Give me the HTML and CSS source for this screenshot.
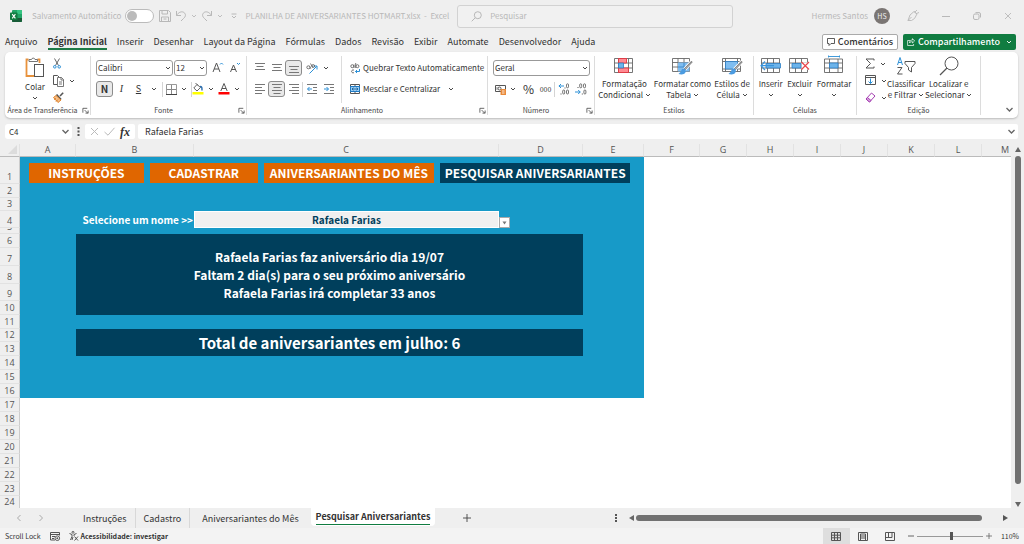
FILE: index.html
```html
<!DOCTYPE html>
<html lang="pt-BR">
<head>
<meta charset="utf-8">
<title>PLANILHA DE ANIVERSARIANTES HOTMART.xlsx - Excel</title>
<link rel="stylesheet" href="styles.css">
</head>
<body>
<svg class="defs" aria-hidden="true">
  <symbol id="chev" viewBox="0 0 6 6"><path d="M1 2l2 2 2-2" fill="none" stroke="currentColor" stroke-width=".9"/></symbol>
  <symbol id="launch" viewBox="0 0 8 8"><path d="M1 6.500V1.500H6M3 3.500l3.500 3.500M7 4v3H4" fill="none" stroke="currentColor" stroke-width=".9"/></symbol>
</svg>

<header class="titlebar">
  <svg class="app" width="12" height="12" viewBox="0 0 12 12"><rect x="2" width="10" height="12" rx="1" fill="#21a366"/><path d="M7 0h4a1 1 0 0 1 1 1v3H7z" fill="#33c481"/><path d="M2 8h10v3a1 1 0 0 1-1 1H3a1 1 0 0 1-1-1z" fill="#185c37"/><rect y="2.500" width="7.500" height="7.500" rx=".8" fill="#107c41"/><path d="M2.200 4.200l3.200 4.200M5.400 4.200L2.200 8.400" stroke="#fff" stroke-width="1.100"/></svg>
  <label class="autosave">Salvamento Automático <input type="checkbox"></label>
  <div class="quick">
    <button aria-label="Salvar"><svg width="12" height="12" viewBox="0 0 12 12"><path d="M.5.500h9L11.500 2.500v9H.5zM3 .5v3.500h5.500V.5M2.500 11.500V7h7v4.500M4.500 9h3" fill="none" stroke="currentColor"/></svg></button>
    <button aria-label="Desfazer"><svg width="12" height="12" viewBox="0 0 12 12"><path d="M1.500 1v4.500H6M1.500 5.500C3.500 2 7 1 9 2.500c2.200 1.800 1.800 4-.5 6L6 11" fill="none" stroke="currentColor"/></svg></button>
    <button aria-label="Opções de desfazer"><svg width="6" height="6"><use href="#chev"/></svg></button>
    <button aria-label="Refazer"><svg width="12" height="12" viewBox="0 0 12 12"><path d="M10.500 1v4.500H6M10.500 5.500C8.500 2 5 1 3 2.500c-2.200 1.800-1.800 4 .5 6L6 11" fill="none" stroke="currentColor"/></svg></button>
    <button aria-label="Opções de refazer"><svg width="6" height="6"><use href="#chev"/></svg></button>
    <button class="more" aria-label="Personalizar"><svg width="6" height="6" viewBox="0 0 6 6"><path d="M.5 1h5M1 3l2 2 2-2" fill="none" stroke="currentColor"/></svg></button>
  </div>
  <span class="doc">PLANILHA DE ANIVERSARIANTES HOTMART.xlsx &nbsp;- &nbsp;Excel</span>
  <label class="search"><svg width="11" height="11" viewBox="0 0 11 11"><circle cx="6.800" cy="4.200" r="3.500" fill="none" stroke="currentColor"/><path d="M4.200 6.800L.7 10.300" stroke="currentColor"/></svg><input type="search" placeholder="Pesquisar" aria-label="Pesquisar"></label>
  <div class="account">
    <span>Hermes Santos</span><span class="avatar">HS</span>
    <button aria-label="Desenhar com caneta"><svg width="12" height="12" viewBox="0 0 12 12"><path d="M1 10.500L3 5l4-3.500L10 4 7.500 8.500 4.500 10.500zM1 10.500L4.500 7M8 2l2-2M9.500 3.500L12 2.500M7 1.500l3 2.500" fill="none" stroke="currentColor" stroke-width=".9"/></svg></button>
    <button aria-label="Minimizar"><svg width="8" height="8" viewBox="0 0 8 8"><path d="M0 4.500h8" stroke="currentColor"/></svg></button>
    <button aria-label="Restaurar"><svg width="8" height="8" viewBox="0 0 8 8"><rect x=".5" y="2" width="5.500" height="5.500" rx="1.500" fill="none" stroke="currentColor"/><path d="M2.500.600H6A1.500 1.500 0 0 1 7.500 2v3.500" fill="none" stroke="currentColor"/></svg></button>
    <button aria-label="Fechar"><svg width="8" height="8" viewBox="0 0 8 8"><path d="M1 1l6 6M7 1L1 7" stroke="currentColor" stroke-width=".9"/></svg></button>
  </div>
</header>

<nav class="tabs">
  <a href="#">Arquivo</a><a href="#" class="on">Página Inicial</a><a href="#">Inserir</a><a href="#">Desenhar</a><a href="#">Layout da Página</a><a href="#">Fórmulas</a><a href="#">Dados</a><a href="#">Revisão</a><a href="#">Exibir</a><a href="#">Automate</a><a href="#">Desenvolvedor</a><a href="#">Ajuda</a>
  <div class="tab-actions">
    <button class="comments"><svg width="8" height="8" viewBox="0 0 8 8"><path d="M.5.500h7v5H4L2 7.500v-2H.5z" fill="none" stroke="currentColor" stroke-width=".8"/></svg>Comentários</button>
    <button class="share"><svg width="8" height="8" viewBox="0 0 8 8"><path d="M3 2.500H.6v5h6V6M2.500 5c0-2 1-3 3-3V.6L7.600 3 5.500 5V3.700C4 3.700 3 4 2.500 5z" fill="none" stroke="currentColor" stroke-width=".7"/></svg>Compartilhamento<svg class="drop" width="6" height="6"><use href="#chev"/></svg></button>
  </div>
</nav>

<section class="ribbon" aria-label="Página Inicial">
  <div class="group g-clip">
    <div class="body">
      <button class="big"><svg width="20" height="21" viewBox="0 0 20 21"><path d="M3.500 2.500H1.500v16.500H9M12.500 2.500h2V6" fill="none" stroke="#e8923c" stroke-width="1.800"/><path d="M4 4.500v-2h2.500a1.800 1.800 0 0 1 3.500 0h2.500v2z" fill="#fff" stroke="#666" stroke-width=".9"/><rect x="9.500" y="7.500" width="9" height="12" fill="#fff" stroke="#555"/></svg><span>Colar</span><svg width="6" height="6"><use href="#chev"/></svg></button>
      <div class="stack">
        <button aria-label="Recortar"><svg width="8" height="11" viewBox="0 0 8 11"><path d="M1.500.500l4 7M6.500.500l-4 7" stroke="#555" stroke-width=".9"/><circle cx="1.800" cy="8.800" r="1.300" fill="none" stroke="#2b8fd6"/><circle cx="6.200" cy="8.800" r="1.300" fill="none" stroke="#2b8fd6"/></svg></button>
        <button aria-label="Copiar"><svg width="11" height="12" viewBox="0 0 11 12"><path d="M4 9.500H.5v-9h4L6 2" fill="none" stroke="#555"/><path d="M4.500 2.500h4l2 2v7h-6zM8 2.500V5h2.500M6 7h3M6 9h3" fill="none" stroke="#555" stroke-width=".8"/></svg><svg width="6" height="6"><use href="#chev"/></svg></button>
        <button aria-label="Pincel de Formatação"><svg width="11" height="11" viewBox="0 0 11 11"><path d="M10.200.800L7 4" stroke="#555" stroke-width="1.600"/><path d="M3.500 2.500l4.500 5" stroke="#555" stroke-width="1.800"/><path d="M3 3.500L.5 5.500l4.500 5 3-2.500z" fill="#f6c08a" stroke="#dc7a1e" stroke-width=".9"/><path d="M1 7.500L3 6.500M3 9.500L5 7.500" stroke="#dc7a1e"/></svg></button>
      </div>
    </div>
    <div class="cap"><span>Área de Transferência</span><button aria-label="Abrir Área de Transferência"><svg width="7" height="7"><use href="#launch"/></svg></button></div>
  </div>

  <div class="group g-font">
    <div class="body rows">
      <div class="line">
        <span class="pick font"><select aria-label="Fonte"><option>Calibri</option></select><svg width="6" height="6"><use href="#chev"/></svg></span>
        <span class="pick size"><select aria-label="Tamanho da fonte"><option>12</option></select><svg width="6" height="6"><use href="#chev"/></svg></span>
        <button class="tool" aria-label="Aumentar fonte"><svg width="12" height="12" viewBox="0 0 12 12"><path d="M1 10L4.500 1 8 10M2.200 7h4.600" fill="none" stroke="#555"/><path d="M8 2.500l1.500-1.500L11 2.500" fill="none" stroke="#2b8fd6"/></svg></button>
        <button class="tool" aria-label="Diminuir fonte"><svg width="12" height="12" viewBox="0 0 12 12"><path d="M1.500 10L4.500 3 7.500 10M2.500 7.500h4" fill="none" stroke="#555"/><path d="M8 1L9.500 2.500 11 1" fill="none" stroke="#2b8fd6"/></svg></button>
      </div>
      <div class="line">
        <button class="tool pressed bold">N</button>
        <button class="tool it">I</button>
        <button class="tool un">S</button>
        <button class="dd" aria-label="Tipos de sublinhado"><svg width="6" height="6"><use href="#chev"/></svg></button>
        <i class="bar"></i>
        <button aria-label="Bordas"><svg width="11" height="11" viewBox="0 0 11 11"><path d="M.5.500h10v10H.5z" fill="none" stroke="#999"/><path d="M5.500 1v9M1 5.500h9" stroke="#888"/><path d="M0 10.500h11" stroke="#444"/></svg></button>
        <button class="dd" aria-label="Opções de bordas"><svg width="6" height="6"><use href="#chev"/></svg></button>
        <i class="bar thin"></i>
        <button aria-label="Cor de preenchimento"><svg width="12" height="12" viewBox="0 0 12 12"><path d="M5 1.500L1.800 5 5 8 8.500 4.500zM3.500 0L6 2.500" fill="#fff" stroke="#555" stroke-width=".9"/><path d="M8 3.500c2 0 2 1 2 4" fill="none" stroke="#2b6fb0" stroke-width="1.400"/><path d="M.5 9h11v2.500H.5z" fill="#ff0"/></svg></button>
        <button class="dd" aria-label="Opções de preenchimento"><svg width="6" height="6"><use href="#chev"/></svg></button>
        <button aria-label="Cor da fonte"><svg width="12" height="12" viewBox="0 0 12 12"><path d="M2.800 8L6 0.500 9.200 8M4 5.500h4" fill="none" stroke="#555"/><path d="M.5 9h11v2.500H.5z" fill="#f00"/></svg></button>
        <button class="dd" aria-label="Opções de cor da fonte"><svg width="6" height="6"><use href="#chev"/></svg></button>
      </div>
    </div>
    <div class="cap"><span>Fonte</span><button aria-label="Abrir Fonte"><svg width="7" height="7"><use href="#launch"/></svg></button></div>
  </div>

  <div class="group g-align">
    <div class="body split">
      <div class="rows">
        <div class="line">
          <button class="tool" aria-label="Alinhar em cima"><svg width="10" height="10" viewBox="0 0 10 10"><path d="M0 .5h10M1.500 3.500h7M0 6.500h10" stroke="#777"/></svg></button>
          <button class="tool" aria-label="Alinhar no meio"><svg width="10" height="10" viewBox="0 0 10 10"><path d="M0 1.500h10M1.500 4.500h7M0 7.500h10" stroke="#777"/></svg></button>
          <button class="tool pressed" aria-label="Alinhar embaixo"><svg width="10" height="10" viewBox="0 0 10 10"><path d="M0 3.500h10M1.500 6.500h7M0 9.500h10" stroke="#777"/></svg></button>
          <button class="orient" aria-label="Orientação"><svg width="12" height="11" viewBox="0 0 12 11"><path d="M3.500 10.500l7-7M7.500 3h3.500v3.500" fill="none" stroke="#2b8fd6"/><ellipse cx="2.500" cy="4.300" rx="1.700" ry="1.500" fill="none" stroke="#555" stroke-width=".8"/><path d="M3.500 3.500l1.300 2.200M4.500.500l2.300 4" stroke="#555" stroke-width=".8"/><circle cx="7.200" cy="3" r="1.400" fill="none" stroke="#555" stroke-width=".8"/></svg><svg width="6" height="6"><use href="#chev"/></svg></button>
        </div>
        <div class="line">
          <button class="tool" aria-label="Alinhar à esquerda"><svg width="10" height="10" viewBox="0 0 10 10"><path d="M0 .5h10M0 3.500h7M0 6.500h10M0 9.500h7" stroke="#777"/></svg></button>
          <button class="tool pressed" aria-label="Centralizar"><svg width="10" height="10" viewBox="0 0 10 10"><path d="M0 .5h10M1.500 3.500h7M0 6.500h10M1.500 9.500h7" stroke="#777"/></svg></button>
          <button class="tool" aria-label="Alinhar à direita"><svg width="10" height="10" viewBox="0 0 10 10"><path d="M0 .5h10M3 3.500h7M0 6.500h10M3 9.500h7" stroke="#777"/></svg></button>
          <i class="bar thin"></i>
          <button class="tool" aria-label="Diminuir recuo"><svg width="10" height="10" viewBox="0 0 10 10"><path d="M0 .5h10M6 3.500h4M6 6.500h4M0 9.500h10" stroke="#777"/><path d="M5 5H.7M2.500 3L.5 5l2 2" fill="none" stroke="#2b8fd6"/></svg></button>
          <button class="tool" aria-label="Aumentar recuo"><svg width="10" height="10" viewBox="0 0 10 10"><path d="M0 .5h10M6 3.500h4M6 6.500h4M0 9.500h10" stroke="#777"/><path d="M0 5h4.300M2.500 3l2 2-2 2" fill="none" stroke="#2b8fd6"/></svg></button>
        </div>
      </div>
      <div class="rows wrapmerge">
        <button class="text"><svg width="10" height="11" viewBox="0 0 10 11"><circle cx="2.300" cy="3.200" r="1.500" fill="none" stroke="#555" stroke-width=".8"/><path d="M4 1.500V5M5.700 0v5" stroke="#555" stroke-width=".8"/><circle cx="7.400" cy="3.200" r="1.500" fill="none" stroke="#555" stroke-width=".8"/><path d="M4 7.200a1.500 1.500 0 1 0 0 2.400" fill="none" stroke="#555" stroke-width=".8"/><path d="M9.500 6v2.500H5.500M7 7L5.500 8.500 7 10" fill="none" stroke="#2b8fd6"/></svg>Quebrar Texto Automaticamente</button>
        <button class="text"><svg width="10" height="10" viewBox="0 0 10 10"><path d="M.5.500h9v9h-9zM5 .5v2M5 7.500v2" fill="#fff" stroke="#555"/><path d="M.5 2.500h9v5h-9z" fill="#9ccdf2" stroke="#1f7ac4"/><path d="M2 5h6M3.500 3.700L2 5l1.500 1.300M6.500 3.700L8 5 6.500 6.300" fill="none" stroke="#135a96" stroke-width=".8"/></svg>Mesclar e Centralizar<svg class="gapleft" width="6" height="6"><use href="#chev"/></svg></button>
      </div>
    </div>
    <div class="cap"><span>Alinhamento</span><button aria-label="Abrir Alinhamento"><svg width="7" height="7"><use href="#launch"/></svg></button></div>
  </div>

  <div class="group g-num">
    <div class="body rows">
      <div class="line"><span class="pick num"><select aria-label="Formato de número"><option>Geral</option></select><svg width="6" height="6"><use href="#chev"/></svg></span></div>
      <div class="line nums">
        <button aria-label="Formato de contabilização"><svg width="11" height="11" viewBox="0 0 11 11"><path d="M.5 1.500h10v6H.5z" fill="#fff" stroke="#555"/><circle cx="4.500" cy="4.500" r="1.500" fill="none" stroke="#555"/><path d="M2 3v3" stroke="#777" stroke-width=".8"/><path d="M5.500 5h5.500v6H5.500z" fill="#e98a3a"/><path d="M7 7h2.500M7 9h2.500" stroke="#fff" stroke-width=".8"/></svg></button>
        <button class="dd" aria-label="Opções"><svg width="6" height="6"><use href="#chev"/></svg></button>
        <button class="pct">%</button>
        <button class="mil">000</button>
        <i class="bar thin"></i>
        <button class="dec" aria-label="Aumentar casas decimais"><svg width="12" height="12" viewBox="0 0 12 12"><path d="M6 3H.8M3 1L1 3l2 2" fill="none" stroke="#2b8fd6"/><path d="M7 4.500v1" stroke="#555"/><rect x="8.500" y=".8" width="2" height="4" rx="1" fill="none" stroke="#555" stroke-width=".8"/><path d="M3 10.500v1" stroke="#555"/><rect x="4.700" y="7" width="2" height="4" rx="1" fill="none" stroke="#555" stroke-width=".8"/><rect x="8.500" y="7" width="2" height="4" rx="1" fill="none" stroke="#555" stroke-width=".8"/></svg></button>
        <button class="dec" aria-label="Diminuir casas decimais"><svg width="12" height="12" viewBox="0 0 12 12"><path d="M0 9h5.300M3.200 7l2 2-2 2" fill="none" stroke="#2b8fd6"/><path d="M3 4v1M7.300 10.500v1" stroke="#555"/><rect x="4.700" y=".8" width="2" height="4" rx="1" fill="none" stroke="#555" stroke-width=".8"/><rect x="8.500" y=".8" width="2" height="4" rx="1" fill="none" stroke="#555" stroke-width=".8"/><rect x="8.900" y="7" width="2" height="4" rx="1" fill="none" stroke="#555" stroke-width=".8"/></svg></button>
      </div>
    </div>
    <div class="cap"><span>Número</span><button aria-label="Abrir Número"><svg width="7" height="7"><use href="#launch"/></svg></button></div>
  </div>

  <div class="group g-style">
    <div class="body bigs">
      <button class="big"><svg width="20" height="18" viewBox="0 0 20 18"><path d="M.5 1.500h18v14H.5zM.5 6h18M.5 11h18M4.500 1.500v14M14.500 1.500v14" fill="#fff" stroke="#666" stroke-width=".9"/><path d="M4.500 1.500h8V6h-8zM4.500 11h10v4.500h-10z" fill="#ff8a92" stroke="#e2343f" stroke-width=".9"/><path d="M4.500 6h5v5h-5z" fill="#6db4ea" stroke="#2b7fc6" stroke-width=".8"/></svg><span>Formatação<br>Condicional <svg width="6" height="6"><use href="#chev"/></svg></span></button>
      <button class="big"><svg width="21" height="18" viewBox="0 0 21 18"><path d="M.5 1.500h17v13H.5zM.5 5.500h17M.5 10h17M6 1.500v13M12 1.500v13" fill="#fff" stroke="#666" stroke-width=".9"/><path d="M6 5.500h11.500v9H6z" fill="#7fbdf0"/><path d="M6 10h11M12 6v8" stroke="#3a86c6" stroke-width=".9"/><path d="M20 4.500l-8 8.500" stroke="#fff" stroke-width="3.500"/><path d="M20 4.500l-7.500 8" stroke="#555" stroke-width="1.800"/><path d="M20 4.500l-7.500 8" stroke="#fff" stroke-width=".6"/><path d="M13 12c-2-1-3.500 0-4 2.500L6.500 17c3 1 7 .5 7.500-3z" fill="#4a9be0"/></svg><span>Formatar como<br>Tabela <svg width="6" height="6"><use href="#chev"/></svg></span></button>
      <button class="big"><svg width="21" height="18" viewBox="0 0 21 18"><path d="M.5 1.500h18v13H.5zM.5 4.500h18M3.500 1.500v13M15.500 1.500v13M.5 12h18" fill="#fff" stroke="#666" stroke-width=".9"/><path d="M3.500 4.500h12V12h-12z" fill="#7fbdf0" stroke="#2b7fc6" stroke-width=".8"/><path d="M20 4.500l-8 8.500" stroke="#fff" stroke-width="3.500"/><path d="M20 4.500l-7.500 8" stroke="#555" stroke-width="1.800"/><path d="M20 4.500l-7.500 8" stroke="#fff" stroke-width=".6"/><path d="M13 12c-2-1-3.500 0-4 2.500L6.500 17c3 1 7 .5 7.500-3z" fill="#4a9be0"/></svg><span>Estilos de<br>Célula <svg width="6" height="6"><use href="#chev"/></svg></span></button>
    </div>
    <div class="cap"><span>Estilos</span></div>
  </div>

  <div class="group g-cells">
    <div class="body bigs">
      <button class="big"><svg width="21" height="18" viewBox="0 0 21 18"><path d="M1.500 1.500h18v14h-18zM1.500 6h18M1.500 11h18M7.500 1.500v14M13.500 1.500v14" fill="#fff" stroke="#666" stroke-width=".9"/><path d="M6 6.500h14.500v4.500H6z" fill="#6db4ea" stroke="#2b7fc6" stroke-width=".8"/><path d="M14 8.700H1M5 4.500L1 8.700 5 13" fill="none" stroke="#3a94dc" stroke-width="1.200"/></svg><span>Inserir</span><svg width="6" height="6"><use href="#chev"/></svg></button>
      <button class="big"><svg width="21" height="18" viewBox="0 0 21 18"><path d="M.5 1.500h18v14H.5zM.5 6h18M.5 11h18M6.500 1.500v14M12.500 1.500v14" fill="#fff" stroke="#666" stroke-width=".9"/><path d="M3 6.500h9v4.500H3z" fill="#6db4ea" stroke="#2b7fc6" stroke-width=".8"/><path d="M12.500 5.500h8v7h-8z" fill="#fff"/><path d="M12.500 5l7.500 7.500M20 5l-7.500 7.500" stroke="#e8454c" stroke-width="1.200"/></svg><span>Excluir</span><svg width="6" height="6"><use href="#chev"/></svg></button>
      <button class="big"><svg width="20" height="18" viewBox="0 0 20 18"><path d="M4.500 -.5h11M4.500 -1.500v2M15.500 -1.500v2" stroke="#2b8fd6" stroke-width=".9"/><path d="M.5 2h18v13.500H.5zM.5 6h18M.5 11h18M5.500 2v13.500M14 2v13.500" fill="#fff" stroke="#666" stroke-width=".9"/><path d="M5.500 6H14v5H5.500z" fill="#6db4ea" stroke="#2b7fc6" stroke-width=".8"/></svg><span>Formatar</span><svg width="6" height="6"><use href="#chev"/></svg></button>
    </div>
    <div class="cap"><span>Células</span></div>
  </div>

  <div class="group g-edit">
    <div class="body">
      <div class="stack">
        <button aria-label="AutoSoma"><svg width="10" height="11" viewBox="0 0 10 11"><path d="M9 2.500V1H1l4.500 4.500L1 10h8V8.500" fill="none" stroke="#555"/></svg><svg width="6" height="6"><use href="#chev"/></svg></button>
        <button aria-label="Preencher"><svg width="11" height="11" viewBox="0 0 11 11"><path d="M.5.500h10v9H.5zM.5 2.500h10" fill="none" stroke="#555"/><path d="M5.500 3.500v5M3.500 6.500l2 2 2-2" fill="none" stroke="#2b8fd6"/></svg><svg width="6" height="6"><use href="#chev"/></svg></button>
        <button aria-label="Limpar"><svg width="11" height="11" viewBox="0 0 11 11"><path d="M6.500 1l3.500 3-5.500 6L1 7z" fill="#fff" stroke="#a33db0"/><path d="M2.500 5.500L1 7l3.500 3L6 8.500z" fill="#d9a0e0" stroke="#a33db0"/></svg><svg width="6" height="6"><use href="#chev"/></svg></button>
      </div>
      <button class="big"><svg width="20" height="18" viewBox="0 0 20 18"><path d="M1.500 8L4 .500 6.500 8M2.300 5.500h3.500" fill="none" stroke="#2b8fd6"/><path d="M1.500 10.500H6L1.500 17H6.500" fill="none" stroke="#555"/><path d="M9 4.500h10v2l-3.500 4v4.500L12.500 13v-2.500L9 6.500z" fill="none" stroke="#555"/></svg><span>Classificar<br>e Filtrar <svg width="6" height="6"><use href="#chev"/></svg></span></button>
      <button class="big"><svg width="20" height="18" viewBox="0 0 20 18"><circle cx="12.500" cy="6.500" r="6.500" fill="none" stroke="#555"/><path d="M8 11l-7 7" stroke="#555" stroke-width="1.200"/></svg><span>Localizar e<br>Selecionar <svg width="6" height="6"><use href="#chev"/></svg></span></button>
    </div>
    <div class="cap"><span>Edição</span></div>
  </div>
  <button class="collapse" aria-label="Recolher faixa de opções"><svg width="9" height="9"><use href="#chev"/></svg></button>
</section>

<div class="formula">
  <span class="pick name"><select aria-label="Caixa de nome"><option>C4</option></select><svg width="9" height="9"><use href="#chev"/></svg></span>
  <svg class="grip" width="3" height="9" viewBox="0 0 3 9"><path d="M.5 0h2v2h-2zM.5 3.500h2v2h-2zM.5 7h2v2h-2z" fill="#555"/></svg>
  <div class="fx">
    <button aria-label="Cancelar"><svg width="9" height="9" viewBox="0 0 9 9"><path d="M1 1l7 7M8 1L1 8" stroke="#bbb"/></svg></button>
    <button aria-label="Inserir"><svg width="11" height="9" viewBox="0 0 11 9"><path d="M.5 5L4 8.200 10.500.800" fill="none" stroke="#bbb"/></svg></button>
    <button class="fn" aria-label="Inserir função">fx</button>
  </div>
  <div class="entry"><input value="Rafaela Farias" aria-label="Barra de fórmulas"><svg width="9" height="9"><use href="#chev"/></svg></div>
</div>

<main class="sheet">
  <div class="view">
    <table>
      <colgroup><col class="ch"><col class="ca"><col class="cb"><col class="cc"><col class="cd"><col class="ce"><col class="cf"><col class="cx"><col class="cx"><col class="cx"><col class="cx"><col class="cx"><col class="cx"><col class="cx"></colgroup>
      <thead><tr class="h13"><th class="corner"><svg width="9" height="9" viewBox="0 0 9 9"><path d="M9 0v9H0z" fill="#dcdcdc"/></svg></th><th>A</th><th>B</th><th>C</th><th>D</th><th>E</th><th>F</th><th>G</th><th>H</th><th>I</th><th>J</th><th>K</th><th>L</th><th>M</th></tr></thead>
      <tbody>
        <tr class="h27"><th>1</th><td colspan="5" class="blue"><div class="links"><a href="#">INSTRUÇÕES</a><a href="#">CADASTRAR</a><a href="#">ANIVERSARIANTES DO MÊS</a><a href="#" class="here">PESQUISAR ANIVERSARIANTES</a></div></td><td colspan="8"></td></tr>
        <tr><th>2</th><td colspan="5" class="blue"></td><td colspan="8"></td></tr>
        <tr class="h13"><th>3</th><td colspan="5" class="blue"></td><td colspan="8"></td></tr>
        <tr class="h17"><th>4</th><td class="blue"></td><td class="blue ask"><label for="nome">Selecione um nome &gt;&gt;</label></td><td class="field"><select id="nome"><option>Rafaela Farias</option></select></td><td class="blue opener"><button aria-label="Abrir lista"><svg width="5" height="4" viewBox="0 0 5 4"><path d="M.5.500h4L2.500 3.500z" fill="#777"/></svg></button></td><td class="blue"></td><td colspan="8"></td></tr>
        <tr class="h6"><th><div>5</div></th><td colspan="5" class="blue"></td><td colspan="8"></td></tr>
        <tr><th>6</th><td rowspan="5" class="blue"></td><td rowspan="5" colspan="3" class="navy msg">Rafaela Farias faz aniversário dia 19/07<br>Faltam 2 dia(s) para o seu próximo aniversário<br>Rafaela Farias irá completar 33 anos</td><td rowspan="5" class="blue"></td><td colspan="8"></td></tr>
        <tr class="h18"><th>7</th><td colspan="8"></td></tr>
        <tr class="h18"><th>8</th><td colspan="8"></td></tr>
        <tr class="h17"><th>9</th><td colspan="8"></td></tr>
        <tr><th>10</th><td colspan="8"></td></tr>
        <tr><th>11</th><td colspan="5" class="blue"></td><td colspan="8"></td></tr>
        <tr class="h13"><th>12</th><td rowspan="2" class="blue"></td><td rowspan="2" colspan="3" class="navy total">Total de aniversariantes em julho: 6</td><td rowspan="2" class="blue"></td><td colspan="8"></td></tr>
        <tr><th>13</th><td colspan="8"></td></tr>
        <tr><th>14</th><td colspan="5" class="blue"></td><td colspan="8"></td></tr>
        <tr><th>15</th><td colspan="5" class="blue"></td><td colspan="8"></td></tr>
        <tr><th>16</th><td colspan="5" class="blue"></td><td colspan="8"></td></tr>
        <tr><th>17</th><td colspan="13"></td></tr>
        <tr><th>18</th><td colspan="13"></td></tr>
        <tr><th>19</th><td colspan="13"></td></tr>
        <tr><th>20</th><td colspan="13"></td></tr>
        <tr><th>21</th><td colspan="13"></td></tr>
        <tr><th>22</th><td colspan="13"></td></tr>
        <tr><th>23</th><td colspan="13"></td></tr>
        <tr class="h13"><th>24</th><td colspan="13"></td></tr>
      </tbody>
    </table>
  </div>
  <div class="vscroll"><svg width="6" height="5" viewBox="0 0 6 5"><path d="M3 0l3 5H0z" fill="#666"/></svg><i></i><svg width="6" height="5" viewBox="0 0 6 5"><path d="M0 0h6L3 5z" fill="#666"/></svg></div>
</main>

<nav class="sheets">
  <button class="arrow" aria-label="Anterior"><svg width="6" height="8" viewBox="0 0 6 8"><path d="M4.500 1l-3 3 3 3" fill="none" stroke="#aaa"/></svg></button>
  <button class="arrow" aria-label="Próxima"><svg width="6" height="8" viewBox="0 0 6 8"><path d="M1.500 1l3 3-3 3" fill="none" stroke="#aaa"/></svg></button>
  <div class="names"><a href="#">Instruções</a><a href="#">Cadastro</a><a href="#" class="wide">Aniversariantes do Mês</a><a href="#" class="cur"><span>Pesquisar Aniversariantes</span></a></div>
  <button class="add" aria-label="Nova planilha"><svg width="8" height="8" viewBox="0 0 8 8"><path d="M4 0v8M0 4h8" stroke="#444" stroke-width=".9"/></svg></button>
  <div class="hscroll"><svg class="dots" width="2" height="8" viewBox="0 0 2 8"><path d="M0 0h2v2H0zM0 3h2v2H0zM0 6h2v2H0z" fill="#555"/></svg><svg width="5" height="6" viewBox="0 0 5 6"><path d="M5 0v6L0 3z" fill="#666"/></svg><i></i><svg class="end" width="5" height="6" viewBox="0 0 5 6"><path d="M0 0v6l5-3z" fill="#555"/></svg></div>
</nav>

<footer class="status">
  <span>Scroll Lock</span>
  <svg width="10" height="9" viewBox="0 0 10 9"><path d="M.5.500h9v3M.5.500v7.500H5M.5 2.500h9M2 4.500h3M2 6.500h2" fill="none" stroke="#555"/><circle cx="7.300" cy="6.200" r="2.300" fill="#fff" stroke="#555"/><circle cx="7.300" cy="6.200" r="1" fill="#555"/></svg>
  <a href="#" class="a11y"><svg width="10" height="10" viewBox="0 0 10 10"><circle cx="4" cy="1.300" r="1" fill="none" stroke="#444" stroke-width=".8"/><path d="M.5 2.500L3 3.500v2L1.500 9M7.500 2.500L5 3.500v1.500M4 6L3 9" fill="none" stroke="#444" stroke-width=".9"/><path d="M5.500 5.500l3.500 4M9 5.500l-3.500 4" stroke="#444" stroke-width=".9"/></svg>Acessibilidade: investigar</a>
  <div class="right">
  <div class="views">
    <button class="sel" aria-label="Normal"><svg width="10" height="9" viewBox="0 0 10 9"><path d="M.5.500h9v8h-9zM.5 3.200h9M.5 5.800h9M3.500.500v8M6.500.500v8" fill="none" stroke="#555"/></svg></button>
    <button aria-label="Layout da Página"><svg width="10" height="9" viewBox="0 0 10 9"><path d="M.5.500h9v8h-9z" fill="none" stroke="#555"/><path d="M2.500 2h5v6.500h-5zM3 4h4M3 6h4" fill="none" stroke="#555"/></svg></button>
    <button aria-label="Quebra de Página"><svg width="10" height="9" viewBox="0 0 10 9"><path d="M.5.500h9v8h-9zM3.500.500v5M.5 5.500h6.500M7 .5v5" fill="none" stroke="#555"/></svg></button>
  </div>
  <div class="zoom"><button aria-label="Reduzir"><svg width="6" height="6" viewBox="0 0 6 6"><path d="M0 3h6" stroke="#666"/></svg></button><input type="range" min="10" max="200" value="110" aria-label="Zoom"><button aria-label="Ampliar"><svg width="6" height="6" viewBox="0 0 6 6"><path d="M0 3h6M3 0v6" stroke="#666" stroke-width=".8"/></svg></button><span>110%</span></div>
  </div>
</footer>
</body>
</html>
```
FILE: styles.css
```css
* { box-sizing: border-box; }
body { margin: 0; height: 100vh; display: flex; flex-direction: column; background: #efefef; color: #333; font: 9px/12px "Noto Sans CJK JP", "Noto Sans", sans-serif; overflow: hidden; }
button, select, input { font: inherit; color: inherit; margin: 0; padding: 0; border: 0; background: none; outline: 0; }
button { display: inline-flex; align-items: center; justify-content: center; flex: none; }
a { color: inherit; text-decoration: none; }
svg { flex: none; display: block; overflow: visible; }
.defs { position: absolute; width: 0; height: 0; }
select { appearance: none; }

.titlebar { display: flex; align-items: center; height: 32px; flex: none; padding: 0 12px 0 10px; color: #b8b8b8; white-space: nowrap; font-size: 8px; }
.app { margin-right: 10px; }
.autosave { display: flex; align-items: center; gap: 4px; }
.autosave input { appearance: none; width: 29px; height: 14px; border: 1px solid #bbb; border-radius: 7px; background: #fff; display: flex; align-items: center; padding-left: 1px; }
.autosave input::before { content: ""; width: 10px; height: 10px; border-radius: 50%; background: #bbb; }
.quick { display: flex; align-items: center; gap: 4px; margin-left: 5px; }
.quick .more { margin-left: 4px; }
.doc { margin-left: 8px; }
.search { display: flex; align-items: center; gap: 8px; width: 276px; height: 23px; margin-left: 8px; padding-left: 13px; border: 1px solid #d2d2d2; border-radius: 3px; background: #f1f1f1; }
.search input { flex: 1; min-width: 0; }
.search input::placeholder { color: #b8b8b8; }
.account { display: flex; align-items: center; margin-left: auto; gap: 23px; }
.account .avatar { margin: 0 -6px 0 -17px; width: 16px; height: 16px; border-radius: 50%; background: #7a7573; color: #eee; font-size: 7px; line-height: 16px; text-align: center; }

.tabs { display: flex; align-items: center; height: 20px; flex: none; gap: 10px; padding: 0 8px 0 5px; white-space: nowrap; }
.tabs .on { font-weight: 700; position: relative; }
.tabs .on::after { content: ""; position: absolute; left: 0; right: 0; bottom: -2px; height: 2px; background: #1d7a46; }
.tab-actions { display: flex; gap: 5px; margin-left: auto; }
.tab-actions button { height: 16px; border-radius: 2px; gap: 3px; padding: 0 4px; font-weight: 500; }
.comments { border: 1px solid #aaa; background: #fff; }
.tab-actions .share { background: #107c41; color: #fff; }
.share .drop { margin-left: 3px; }

.ribbon { display: flex; flex: none; height: 66px; margin: 0 6px 0 5px; padding-top: 4px; background: #fff; border-radius: 5px; box-shadow: 0 1px 2px #bbb; white-space: nowrap; font-size: 8px; }
.group { display: flex; flex-direction: column; border-right: 1px solid #dcdcdc; margin-bottom: 3px; flex: none; }
.body { flex: 1; display: flex; min-height: 0; }
.cap { display: flex; height: 9px; font-size: 7px; line-height: 9px; align-items: center; color: #444; }
.cap span { flex: 1; text-align: center; }
.cap button { width: 10px; }
.rows { display: flex; flex-direction: column; gap: 5px; padding-top: 4px; }
.line { display: flex; align-items: center; height: 16px; }
.g-clip { width: 86px; } .g-font { width: 156px; } .g-align { width: 241px; } .g-num { width: 107px; } .g-style { width: 159px; } .g-cells { width: 103px; } .g-edit { width: 124px; }
.big { flex-direction: column; justify-content: flex-start; line-height: 11px; gap: 3px; padding-top: 1px; }
.big span { text-align: center; }
.big span svg { display: inline-block; }
.stack { display: flex; flex-direction: column; justify-content: space-between; align-items: flex-start; padding: 1px 0 2px; }
.stack button { gap: 5px; height: 13px; }
.g-clip .body { padding-left: 20px; gap: 8px; }
.pick { display: flex; align-items: center; position: relative; }
.pick select { width: 100%; height: 16px; padding-left: 1px; border: 1px solid #999; border-radius: 3px; background: #fff; }
.pick svg { position: absolute; right: 2px; pointer-events: none; }
.font { width: 77px; margin-right: 1px; }
.size { width: 33px; margin-right: 2px; }
.num { width: 97px; }
.g-font .body { padding-left: 5px; }
.tool { width: 17px; height: 16px; border-radius: 3px; }
.pressed { border: 1px solid #8c8c8c; background: #e9e9e9; }
.bold { font-weight: 700; font-size: 10px; }
.it { font-family: "Liberation Serif", serif; font-style: italic; font-size: 10px; }
.un { text-decoration: underline; font-size: 9px; }
.dd { width: 14px; }
.bar { width: 1px; height: 15px; background: #d4d4d4; margin: 0 3px 0 1px; }
.bar.thin { margin: 0; }
.split .rows:first-child { width: 95px; padding-left: 4px; border-right: 1px solid #dcdcdc; margin-bottom: 3px; }
.orient { gap: 5px; margin-left: 4px; }
.wrapmerge { padding-left: 8px; align-items: flex-start; }
.text { height: 16px; gap: 3px; }
.gapleft { margin-left: 5px; }
.g-num .body { padding-left: 5px; }
.nums { padding-left: 2px; }
.pct { font-size: 12px; width: 17px; }
.mil { font-size: 7px; width: 17px; }
.dec { width: 17px; }
.bigs { justify-content: space-evenly; }
.g-edit .body { padding: 0 10px 0 8px; justify-content: space-between; }
.collapse { margin: auto 4px 4px auto; }
.collapse, .name svg, .entry svg { color: #666; }

.formula { display: flex; align-items: center; flex: none; height: 15px; margin: 6px 6px 5px 5px; gap: 3px; }
.formula > * { height: 15px; }
.name { width: 67px; font-size: 8px; }
.name select { height: 15px; border: 0; padding-left: 4px; }
.formula .grip { height: 9px; margin: 0 2px; }
.fx { display: flex; width: 50px; background: #fff; border-radius: 2px; justify-content: space-evenly; align-items: center; }
.fn { font: italic 700 12px/14px "Liberation Serif", serif; }
.entry { display: flex; flex: 1; background: #fff; border-radius: 2px; align-items: center; padding: 0 2px 0 7px; }
.entry input { flex: 1; min-width: 0; }

.sheet { display: flex; flex: 1; min-height: 0; }
.view { flex: 1; min-width: 0; overflow: hidden; background: #fff; }
table { table-layout: fixed; width: 1029px; border-collapse: separate; border-spacing: 0; }
.ch { width: 20px; } .ca { width: 56px; } .cb { width: 118px; } .cc { width: 305px; } .cd { width: 84px; } .ce { width: 61px; } .cf { width: 56px; } .cx { width: 47px; }
th, td { padding: 0; }
tr { height: 14px; }
th { background: #efefef; color: #555; font-family: "Open Sans", sans-serif; font-weight: 400; line-height: 12px; vertical-align: bottom; border-right: 1px solid #ccc; border-bottom: 1px solid #e2e2e2; }
thead th { border-right-color: #e2e2e2; border-bottom-color: #bbb; }
.corner svg { margin: 0 0 2px 8px; }
.h27 { height: 27px; } .h13 { height: 13px; } .h17 { height: 17px; } .h18 { height: 18px; } .h6 { height: 6px; }
.h6 div { height: 5px; overflow: hidden; display: flex; flex-direction: column; justify-content: flex-end; }
.blue { background: #179ac8; }
.navy { background: #003f5c; color: #fff; font-weight: 700; text-align: center; vertical-align: middle; }
.links { display: flex; gap: 6px; padding: 5px 14px 0 9px; font-weight: 700; font-size: 12px; line-height: 20px; color: #fff; white-space: nowrap; }
.links a { height: 20px; min-width: 0; background: #e06600; text-align: center; flex: 115 1 0; }
.links a:nth-child(2) { flex-grow: 108; }
.links a:nth-child(3) { flex-grow: 171; }
.links .here { background: #003f5c; flex-grow: 190; }
.ask { text-align: right; font-weight: 700; font-size: 10px; line-height: 16px; color: #fff; white-space: nowrap; padding-right: 1px; }
.field select { display: block; width: 100%; height: 17px; background: #f0f0f0; border: 1px solid #fff; color: #003f5c; font-weight: 700; font-size: 10px; line-height: 15px; text-align: center; text-align-last: center; }
.opener { vertical-align: bottom; }
.opener button { display: flex; width: 11px; height: 11px; background: #fff; border: 1px solid #aaa; }
.msg { font-size: 12px; line-height: 18px; }
.total { font-size: 15px; line-height: 20px; }
.vscroll { width: 13px; display: flex; flex-direction: column; align-items: center; padding: 3px 0 1px; gap: 4px; }
.vscroll i { width: 6px; flex: 1; margin-bottom: 14px; border-radius: 3px; background: #717171; }

.sheets { display: flex; align-items: center; flex: none; height: 20px; padding: 0 16px 0 15px; white-space: nowrap; }
.arrow { width: 8px; margin-right: 14px; }
.names { display: flex; align-self: stretch; margin-left: 16px; }
.names a { padding: 5px 8px 0; border-right: 1px solid #d8d8d8; line-height: 12px; }
.names .wide { padding: 5px 12px 0; border: 0; }
.names .cur { padding: 3px 5px 0; height: 18px; background: #fff; border: 0; border-radius: 0 0 4px 4px; font-weight: 700; }
.cur span { display: block; border-bottom: 1px solid #107c41; padding-bottom: 1px; }
.add { margin-left: 28px; }
.hscroll { display: flex; align-items: center; flex: 0 1 393px; margin-left: auto; }
.hscroll .dots { margin-right: 12px; }
.hscroll i { flex: 1; height: 6px; border-radius: 3px; background: #717171; margin: 0 21px 0 2px; }

.status { display: flex; align-items: center; flex: none; height: 16px; padding: 0 5px; gap: 9px; background: #f3f3f3; font-size: 7px; }
.a11y { display: flex; align-items: center; gap: 2px; font-weight: 700; }
.right { display: flex; margin-left: auto; align-self: stretch; gap: 4px; }
.views { display: flex; }
.views button { width: 27px; }
.views .sel { background: #dedede; }
.zoom { display: flex; align-items: center; gap: 3px; }
.zoom span { margin-left: 6px; }
.zoom input { appearance: none; width: 66px; height: 8px; background: linear-gradient(#999, #999) center / 100% 1px no-repeat; }
.zoom input::-webkit-slider-thumb { appearance: none; width: 3px; height: 8px; background: #555; }
```
